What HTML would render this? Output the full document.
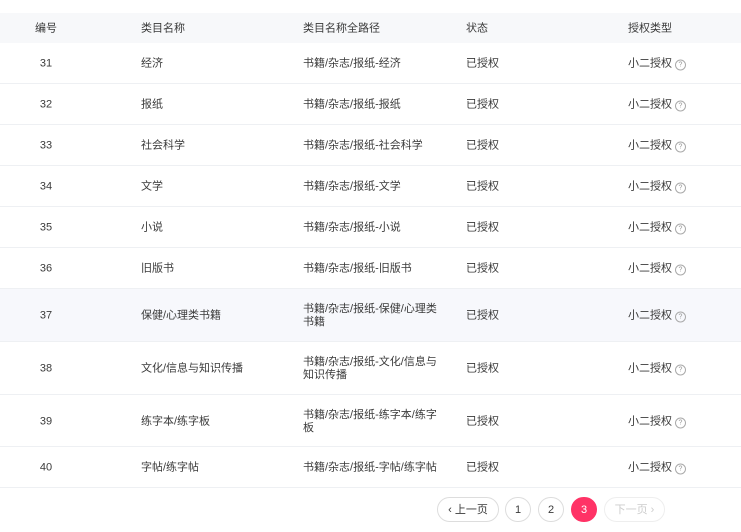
<!DOCTYPE html><html><head><meta charset="utf-8"><style>
body{margin:0;width:741px;height:532px;background:#fff;font-family:"Liberation Sans","Noto Sans CJK SC",sans-serif;font-size:11px;color:#3a3a3a;position:relative;overflow:hidden}
.hd{position:absolute;top:13px;left:0;width:741px;height:30px;background:#f7f8fa}
.r{position:absolute;left:0;width:741px;border-bottom:1px solid #eef0f3;box-sizing:border-box}
.c{position:absolute;top:50%;transform:translateY(-50%);margin-top:1px;line-height:13px}
.c1{left:32px;width:28px;text-align:center}.c2{left:141px}.c3{left:303px;width:140px}.c4{left:466px}.c5{left:628px}
.q{display:inline-block;width:9px;height:9px;border:1px solid #aaa;border-radius:50%;font-size:7px;line-height:9px;text-align:center;color:#999;margin-left:3px;vertical-align:0px}
.pg{position:absolute;top:497px;height:25px;border:1px solid #ddd;border-radius:13px;box-sizing:border-box;text-align:center;line-height:25px;font-size:11px}
</style></head><body>
<div class="hd"><div class="c c1">编号</div><div class="c c2">类目名称</div><div class="c c3">类目名称全路径</div><div class="c c4">状态</div><div class="c c5">授权类型</div></div>
<div class="r" style="top:43px;height:41px"><div class="c c1">31</div><div class="c c2">经济</div><div class="c c3">书籍/杂志/报纸-经济</div><div class="c c4">已授权</div><div class="c c5">小二授权<span class="q">?</span></div></div>
<div class="r" style="top:84px;height:41px"><div class="c c1">32</div><div class="c c2">报纸</div><div class="c c3">书籍/杂志/报纸-报纸</div><div class="c c4">已授权</div><div class="c c5">小二授权<span class="q">?</span></div></div>
<div class="r" style="top:125px;height:41px"><div class="c c1">33</div><div class="c c2">社会科学</div><div class="c c3">书籍/杂志/报纸-社会科学</div><div class="c c4">已授权</div><div class="c c5">小二授权<span class="q">?</span></div></div>
<div class="r" style="top:166px;height:41px"><div class="c c1">34</div><div class="c c2">文学</div><div class="c c3">书籍/杂志/报纸-文学</div><div class="c c4">已授权</div><div class="c c5">小二授权<span class="q">?</span></div></div>
<div class="r" style="top:207px;height:41px"><div class="c c1">35</div><div class="c c2">小说</div><div class="c c3">书籍/杂志/报纸-小说</div><div class="c c4">已授权</div><div class="c c5">小二授权<span class="q">?</span></div></div>
<div class="r" style="top:248px;height:41px"><div class="c c1">36</div><div class="c c2">旧版书</div><div class="c c3">书籍/杂志/报纸-旧版书</div><div class="c c4">已授权</div><div class="c c5">小二授权<span class="q">?</span></div></div>
<div class="r" style="top:289px;height:53px;background:#f7f8fc"><div class="c c1">37</div><div class="c c2">保健/心理类书籍</div><div class="c c3">书籍/杂志/报纸-保健/心理类书籍</div><div class="c c4">已授权</div><div class="c c5">小二授权<span class="q">?</span></div></div>
<div class="r" style="top:342px;height:53px"><div class="c c1">38</div><div class="c c2">文化/信息与知识传播</div><div class="c c3">书籍/杂志/报纸-文化/信息与知识传播</div><div class="c c4">已授权</div><div class="c c5">小二授权<span class="q">?</span></div></div>
<div class="r" style="top:395px;height:52px"><div class="c c1">39</div><div class="c c2">练字本/练字板</div><div class="c c3">书籍/杂志/报纸-练字本/练字板</div><div class="c c4">已授权</div><div class="c c5">小二授权<span class="q">?</span></div></div>
<div class="r" style="top:447px;height:41px"><div class="c c1">40</div><div class="c c2">字帖/练字帖</div><div class="c c3">书籍/杂志/报纸-字帖/练字帖</div><div class="c c4">已授权</div><div class="c c5">小二授权<span class="q">?</span></div></div>
<div class="pg" style="left:437px;width:62px">‹ 上一页</div>
<div class="pg" style="left:505px;width:26px">1</div>
<div class="pg" style="left:538px;width:26px">2</div>
<div class="pg" style="left:571px;width:26px;background:#ff3366;border-color:#ff3366;color:#fff">3</div>
<div class="pg" style="left:604px;width:61px;color:#ccc;border-color:#eee">下一页 ›</div>
</body></html>
